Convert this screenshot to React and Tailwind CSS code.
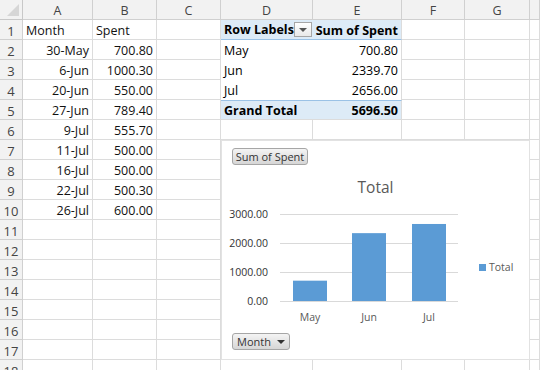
import React from "react";

const cols = ["A", "B", "C", "D", "E", "F", "G", ""];

const data = {
  1: { A: "Month", B: "Spent" },
  2: { A: "30-May", B: "700.80" },
  3: { A: "6-Jun", B: "1000.30" },
  4: { A: "20-Jun", B: "550.00" },
  5: { A: "27-Jun", B: "789.40" },
  6: { A: "9-Jul", B: "555.70" },
  7: { A: "11-Jul", B: "500.00" },
  8: { A: "16-Jul", B: "500.00" },
  9: { A: "22-Jul", B: "500.30" },
  10: { A: "26-Jul", B: "600.00" },
};

const pivot = {
  2: ["May", "700.80"],
  3: ["Jun", "2339.70"],
  4: ["Jul", "2656.00"],
};

const bars = [
  { label: "May", value: 700.8, x: 71 },
  { label: "Jun", value: 2339.7, x: 130 },
  { label: "Jul", value: 2656.0, x: 190 },
];

function Cell({ children, right, className = "" }) {
  return (
    <div
      className={`h-[20px] border-r border-b border-[#dcdcdc] px-[3px] leading-[22px] overflow-hidden whitespace-nowrap text-[#111] ${
        right ? "text-right" : ""
      } ${className}`}
    >
      {children}
    </div>
  );
}

function PivotCells({ row }) {
  if (row === 1) {
    return (
      <>
        <div className="h-[20px] bg-[#ddebf7] border-b border-[#9bc2e6] pl-[3px] pr-[1px] flex items-center justify-between font-bold leading-[22px]">
          <span className="whitespace-nowrap">Row Labels</span>
          <span className="w-[18px] h-[15px] border border-[#a6a6a6] bg-gradient-to-b from-white to-[#e9e9e9] flex items-center justify-center">
            <span className="w-0 h-0 border-l-[4px] border-r-[4px] border-t-[4px] border-l-transparent border-r-transparent border-t-[#555]" />
          </span>
        </div>
        <div className="h-[20px] bg-[#ddebf7] border-b border-r border-[#9bc2e6] border-r-[#dcdcdc] pr-[3px] text-right font-bold leading-[22px] whitespace-nowrap overflow-hidden">
          Sum of Spent
        </div>
      </>
    );
  }
  if (row === 5) {
    return (
      <>
        <div className="h-[20px] bg-[#ddebf7] border-t border-[#9bc2e6] border-b border-b-[#dcdcdc] pl-[3px] font-bold leading-[20px] whitespace-nowrap">
          Grand Total
        </div>
        <div className="h-[20px] bg-[#ddebf7] border-t border-[#9bc2e6] border-b border-b-[#dcdcdc] border-r border-r-[#dcdcdc] pr-[3px] text-right font-bold leading-[20px]">
          5696.50
        </div>
      </>
    );
  }
  const [label, val] = pivot[row];
  return (
    <>
      <div className="h-[20px] pl-[3px] leading-[22px]">{label}</div>
      <div className="h-[20px] border-r border-[#dcdcdc] pr-[3px] text-right leading-[22px]">{val}</div>
    </>
  );
}

function Chart() {
  const scale = 29 / 1000;
  return (
    <div className="absolute left-[222px] top-[141px] w-[307px] h-[218px] bg-white ring-1 ring-[#e2e2e2] flex flex-col">
      <div className="pl-[10px] pt-[7px]">
        <div className="w-[76px] h-[17px] rounded-[3px] border border-[#a6a6a6] bg-gradient-to-b from-[#f4f4f4] to-[#d6d6d6] text-[11px] leading-[15px] text-[#333] text-center whitespace-nowrap">
          Sum of Spent
        </div>
      </div>
      <svg width="307" height="168" className="block" fontFamily="'Open Sans', sans-serif">
        <text x="153.5" y="28" textAnchor="middle" fontSize="15.5" fill="#595959">
          Total
        </text>
        {[3000, 2000, 1000, 0].map((v, i) => {
          const y = 49 + i * 29;
          return (
            <g key={v}>
              <line x1="58" x2="236" y1={y + 0.5} y2={y + 0.5} stroke="#d9d9d9" strokeWidth="1" />
              <text x="46" y={y + 4} textAnchor="end" fontSize="10.5" fill="#333">
                {v.toFixed(2)}
              </text>
            </g>
          );
        })}
        {bars.map((b) => {
          const h = b.value * scale;
          return (
            <g key={b.label}>
              <rect x={b.x} y={136 - h} width="34" height={h} fill="#5b9bd5" />
              <text x={b.x + 17} y="156" textAnchor="middle" fontSize="10.5" fill="#595959">
                {b.label}
              </text>
            </g>
          );
        })}
        <rect x="257" y="99" width="7" height="7" fill="#5b9bd5" />
        <text x="267" y="106" fontSize="10.5" fill="#595959">
          Total
        </text>
      </svg>
      <div className="pl-[10px]">
        <div className="w-[58px] h-[17px] rounded-[3px] border border-[#a6a6a6] bg-gradient-to-b from-[#f4f4f4] to-[#d6d6d6] text-[11px] leading-[15px] text-[#333] flex items-center pl-[4px] gap-[6px]">
          <span>Month</span>
          <span className="w-0 h-0 border-l-[4px] border-r-[4px] border-t-[4px] border-l-transparent border-r-transparent border-t-[#333]" />
        </div>
      </div>
    </div>
  );
}

export default function App() {
  const rows = Array.from({ length: 18 }, (_, i) => i + 1);
  return (
    <div className="w-[540px] h-[370px] overflow-hidden bg-white font-['Open_Sans',sans-serif] text-[12.5px]">
      <div className="relative grid grid-cols-[23px_70px_64px_64px_92px_89px_63px_65px_1fr]">
        <div className="h-[20px] bg-[#f2f2f2] border-r border-b border-[#c8c8c8] relative">
          <svg className="absolute right-[3px] bottom-[3px]" width="12" height="12">
            <polygon points="12,0 12,12 0,12" fill="#d6d6d6" />
          </svg>
        </div>
        {cols.map((c, i) => (
          <div
            key={i}
            className="h-[20px] bg-[#f2f2f2] border-r border-b border-[#d0d0d0] text-center leading-[21px] text-[#444]"
          >
            {c}
          </div>
        ))}
        {rows.map((r) => (
          <React.Fragment key={r}>
            <div className="h-[20px] bg-[#f2f2f2] border-r border-b border-[#d0d0d0] text-center leading-[22px] text-[13px] text-[#444]">
              {r}
            </div>
            <Cell right={r > 1}>{data[r]?.A}</Cell>
            <Cell right={r > 1}>{data[r]?.B}</Cell>
            <Cell />
            {r <= 5 ? (
              <PivotCells row={r} />
            ) : (
              <>
                <Cell />
                <Cell />
              </>
            )}
            <Cell />
            <Cell />
            <Cell />
          </React.Fragment>
        ))}
        <Chart />
      </div>
    </div>
  );
}
